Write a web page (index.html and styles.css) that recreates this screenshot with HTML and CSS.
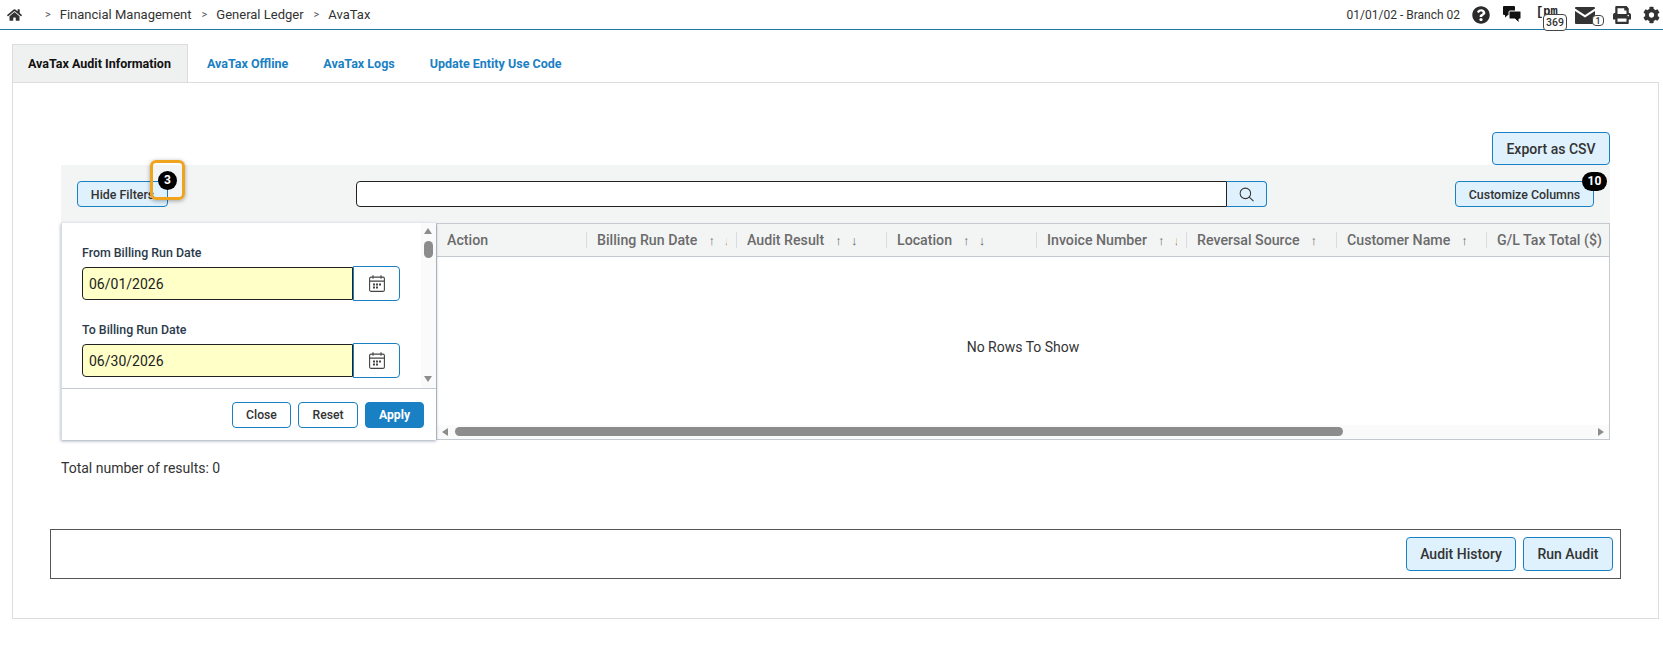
FILE: index.html
```html
<!DOCTYPE html>
<html lang="en">
<head>
    <meta charset="UTF-8">
    <title>AvaTax</title>
    <link rel="stylesheet" href="styles.css">
</head>
<body>
    <header class="topbar">
        <svg class="home-icon" viewBox="0 0 576 512"><path d="M280.37 148.26L96 300.11V464a16 16 0 0 0 16 16l112.06-.29a16 16 0 0 0 15.92-16V368a16 16 0 0 1 16-16h64a16 16 0 0 1 16 16v95.64a16 16 0 0 0 16 16.05L464 480a16 16 0 0 0 16-16V300L295.67 148.26a12.19 12.19 0 0 0-15.3 0zM571.6 251.47L488 182.56V44.05a12 12 0 0 0-12-12h-56a12 12 0 0 0-12 12v72.61L318.47 43a48 48 0 0 0-61 0L4.34 251.47a12 12 0 0 0-1.6 16.9l25.5 31A12 12 0 0 0 45.15 301l235.22-193.74a12.19 12.19 0 0 1 15.3 0L530.9 301a12 12 0 0 0 16.9-1.6l25.5-31a12 12 0 0 0-1.7-16.93z"/></svg>
        <nav class="crumbs">
            <span class="sep">&gt;</span><span>Financial Management</span>
            <span class="sep">&gt;</span><span>General Ledger</span>
            <span class="sep">&gt;</span><span>AvaTax</span>
        </nav>
        <div class="top-right">
            <span class="branch">01/01/02 - Branch 02</span>
            <svg class="top-icon help" viewBox="0 0 512 512"><path d="M504 256c0 136.997-111.043 248-248 248S8 392.997 8 256C8 119.083 119.043 8 256 8s248 111.083 248 248zM262.655 90c-54.497 0-89.255 22.957-116.549 63.758-3.536 5.286-2.353 12.415 2.715 16.258l34.699 26.31c5.205 3.947 12.621 3.008 16.665-2.122 17.864-22.658 30.113-35.797 57.303-35.797 20.429 0 45.698 13.148 45.698 32.958 0 14.976-12.363 22.667-32.534 33.976C247.128 238.528 216 254.941 216 296v4c0 6.627 5.373 12 12 12h56c6.627 0 12-5.373 12-12v-1.333c0-28.462 83.186-29.647 83.186-106.667 0-58.002-60.165-102-116.531-102zM256 338c-25.365 0-46 20.635-46 46 0 25.364 20.635 46 46 46s46-20.636 46-46c0-25.365-20.635-46-46-46z"/></svg>
            <svg class="top-icon chat" viewBox="0 0 18 17"><path d="M1 0h10a1 1 0 0 1 1 1v7a1 1 0 0 1-1 1H5l-3 2.500V9H1a1 1 0 0 1-1-1V1a1 1 0 0 1 1-1z"/><path class="chat-front" d="M7 5h10a1 1 0 0 1 1 1v6a1 1 0 0 1-1 1h-1v4l-4-4H7a1 1 0 0 1-1-1V6a1 1 0 0 1 1-1z"/></svg>
            <span class="cpm">[pm<span class="count count-cpm">369</span></span>
            <span class="mail">
                <svg class="top-icon mail-icon" viewBox="0 0 20 17"><path d="M1 0h18a1 1 0 0 1 1 1v.500L10 8 0 1.500V1a1 1 0 0 1 1-1z"/><path d="M0 4l10 6.500L20 4v12a1 1 0 0 1-1 1H1a1 1 0 0 1-1-1z"/></svg>
                <span class="count count-mail">1</span>
            </span>
            <svg class="top-icon print" viewBox="0 0 512 512"><path d="M448 192V77.25c0-8.49-3.37-16.62-9.37-22.63L393.37 9.37c-6-6-14.14-9.37-22.63-9.37H96C78.33 0 64 14.33 64 32v160c-35.35 0-64 28.65-64 64v112c0 8.84 7.16 16 16 16h48v96c0 17.67 14.33 32 32 32h320c17.67 0 32-14.33 32-32v-96h48c8.84 0 16-7.16 16-16V256c0-35.35-28.65-64-64-64zm-64 256H128v-96h256v96zm0-224H128V64h192v48c0 8.84 7.16 16 16 16h48v96zm48 72c-13.25 0-24-10.75-24-24 0-13.26 10.75-24 24-24s24 10.74 24 24c0 13.25-10.75 24-24 24z"/></svg>
            <svg class="top-icon cog" viewBox="0 0 512 512"><path d="M487.400 315.700l-42.600-24.600c4.300-23.200 4.300-47 0-70.200l42.600-24.600c4.900-2.800 7.100-8.600 5.500-14-11.100-35.600-30-67.800-54.700-94.600-3.800-4.100-10-5.100-14.800-2.300L380.800 110c-17.900-15.400-38.500-27.300-60.800-35.100V25.800c0-5.600-3.900-10.500-9.400-11.700-36.700-8.200-74.300-7.800-109.200 0-5.500 1.200-9.400 6.100-9.400 11.700V75c-22.200 7.900-42.800 19.800-60.800 35.100L88.700 85.500c-4.900-2.800-11-1.900-14.800 2.300-24.700 26.700-43.600 58.900-54.700 94.600-1.700 5.400.6 11.200 5.500 14L67.300 221c-4.300 23.200-4.300 47 0 70.200l-42.600 24.600c-4.900 2.800-7.100 8.600-5.500 14 11.100 35.600 30 67.800 54.700 94.600 3.800 4.100 10 5.100 14.800 2.300l42.600-24.600c17.900 15.400 38.500 27.300 60.800 35.100v49.200c0 5.600 3.900 10.500 9.400 11.700 36.700 8.200 74.300 7.800 109.200 0 5.500-1.200 9.400-6.100 9.400-11.700v-49.200c22.200-7.900 42.800-19.800 60.800-35.100l42.600 24.600c4.900 2.800 11 1.900 14.800-2.300 24.700-26.700 43.600-58.900 54.700-94.600 1.500-5.500-.7-11.300-5.600-14.100zM256 336c-44.100 0-80-35.900-80-80s35.900-80 80-80 80 35.900 80 80-35.900 80-80 80z"/></svg>
        </div>
    </header>

    <div class="tabs">
        <a class="tab active">AvaTax Audit Information</a>
        <a class="tab">AvaTax Offline</a>
        <a class="tab">AvaTax Logs</a>
        <a class="tab">Update Entity Use Code</a>
    </div>

    <main class="panel">
        <section class="workspace">
            <div class="export-row">
                <button class="btn btn-large export-btn">Export as CSV</button>
            </div>

            <div class="toolbar">
                <div class="filter-toggle">
                    <button class="btn btn-small hide-filters">Hide Filters</button>
                    <span class="callout"></span>
                    <span class="badge badge-filters">3</span>
                </div>
                <div class="search">
                    <input class="search-input" type="text">
                    <button class="search-btn">
                        <svg viewBox="0 0 16 16"><circle cx="6.800" cy="6.800" r="5.600"/><path d="M10.900 10.900L15.500 15"/></svg>
                    </button>
                </div>
                <div class="columns-toggle">
                    <button class="btn btn-small customize">Customize Columns</button>
                    <span class="badge badge-columns">10</span>
                </div>
            </div>

            <div class="results">
                <aside class="filters">
                    <div class="filter-body">
                        <div class="filter-fields">
                            <label class="field-label">From Billing Run Date</label>
                            <div class="date-field">
                                <input class="date-input" type="text" value="06/01/2026">
                                <button class="cal-btn">
                                    <svg viewBox="0 0 16 17"><rect x="0.600" y="2.100" width="14.800" height="14.300" rx="1.500"/><path d="M0.600 6.100h14.800M4 0.300v3.500M12 0.300v3.500"/><path class="cal-dots" d="M4 8.500h2v2H4zM7 8.500h2v2H7zM10 8.500h2v2h-2zM4 11.500h2v2H4zM7 11.500h2v2H7z"/></svg>
                                </button>
                            </div>
                            <label class="field-label second">To Billing Run Date</label>
                            <div class="date-field">
                                <input class="date-input" type="text" value="06/30/2026">
                                <button class="cal-btn">
                                    <svg viewBox="0 0 16 17"><rect x="0.600" y="2.100" width="14.800" height="14.300" rx="1.500"/><path d="M0.600 6.100h14.800M4 0.300v3.500M12 0.300v3.500"/><path class="cal-dots" d="M4 8.500h2v2H4zM7 8.500h2v2H7zM10 8.500h2v2h-2zM4 11.500h2v2H4zM7 11.500h2v2H7z"/></svg>
                                </button>
                            </div>
                        </div>
                        <div class="v-scroll">
                            <span class="arrow-up"></span>
                            <span class="v-thumb"></span>
                            <span class="arrow-down"></span>
                        </div>
                    </div>
                    <div class="filter-actions">
                        <button class="btn-outline">Close</button>
                        <button class="btn-outline">Reset</button>
                        <button class="btn-apply">Apply</button>
                    </div>
                </aside>

                <div class="grid">
                    <div class="grid-head">
                        <div class="col"><div class="col-label">Action</div></div>
                        <div class="col"><div class="col-label">Billing Run Date<span class="sort">↑ ↓</span></div></div>
                        <div class="col"><div class="col-label">Audit Result<span class="sort">↑ ↓</span></div></div>
                        <div class="col"><div class="col-label">Location<span class="sort">↑ ↓</span></div></div>
                        <div class="col"><div class="col-label">Invoice Number<span class="sort">↑ ↓</span></div></div>
                        <div class="col"><div class="col-label">Reversal Source<span class="sort">↑</span></div></div>
                        <div class="col"><div class="col-label">Customer Name<span class="sort">↑</span></div></div>
                        <div class="col"><div class="col-label">G/L Tax Total ($)</div></div>
                    </div>
                    <div class="grid-body">No Rows To Show</div>
                    <div class="h-scroll">
                        <span class="arrow-left"></span>
                        <span class="h-thumb"></span>
                        <span class="arrow-right"></span>
                    </div>
                </div>
            </div>

            <p class="total">Total number of results: 0</p>
        </section>

        <div class="action-bar">
            <button class="btn btn-large audit-history">Audit History</button>
            <button class="btn btn-large run-audit">Run Audit</button>
        </div>
    </main>
</body>
</html>
```

FILE: styles.css
```css
:root {
    --blue: #1a80c4;
    --btn-bg: #dff1fd;
    --text: #333;
    --line: #c3c9cf;
}

* {
    box-sizing: border-box;
}

body {
    margin: 0;
    background: #fff;
    color: var(--text);
    font-family: Roboto, "Liberation Sans", sans-serif;
    font-size: 14px;
}

button {
    font-family: inherit;
    padding: 0;
    cursor: pointer;
}

/* top bar */
.topbar {
    display: flex;
    align-items: center;
    height: 30px;
    border-bottom: 1px solid #1b77a6;
    padding: 0 3px 0 7px;
}

.home-icon {
    width: 15px;
    height: 14px;
    fill: #333;
}

.crumbs {
    margin-left: 23px;
    font-size: 13px;
    display: flex;
    align-items: center;
    color: #333;
}

.sep {
    font-size: 11px;
    margin-right: 9px;
    color: #555;
}

.crumbs span:not(.sep) {
    margin-right: 10px;
}

.top-right {
    margin-left: auto;
    display: flex;
    align-items: center;
}

.branch {
    font-size: 12px;
    margin-right: 12px;
}

.top-icon {
    display: block;
    fill: #2b2b2b;
}

.help {
    width: 18px;
    height: 18px;
    margin-right: 13px;
}

.chat {
    width: 18px;
    height: 17px;
    fill: #111;
    margin-right: 15px;
}

.chat-front {
    stroke: #fff;
    stroke-width: 1;
}

.cpm {
    position: relative;
    width: 39px;
    font-family: "Liberation Mono", monospace;
    font-size: 12px;
    font-weight: 700;
    line-height: 14px;
    margin-top: -5px;
    color: #222;
}

.count {
    position: absolute;
    background: #fff;
    border: 1px solid #444;
    border-radius: 4px;
    font-family: Roboto, "Liberation Sans", sans-serif;
    font-size: 10.500px;
    font-weight: 500;
    text-align: center;
    color: #333;
}

.count-cpm {
    left: 7px;
    top: 9px;
    width: 24px;
    height: 17px;
    line-height: 15px;
}

.mail {
    position: relative;
    width: 37px;
    margin-top: 1px;
}

.mail-icon {
    width: 20px;
    height: 17px;
    fill: #333;
}

.count-mail {
    left: 17px;
    top: 8px;
    width: 12px;
    height: 11px;
    line-height: 10px;
    font-size: 9px;
}

.print {
    width: 20px;
    height: 18px;
    fill: #333;
    margin-right: 11px;
}

.cog {
    width: 17px;
    height: 18px;
    fill: #333;
}

/* tabs */
.tabs {
    display: flex;
    margin: 14px 0 0 12px;
    height: 38px;
}

.tab {
    display: flex;
    align-items: center;
    padding: 0 17.500px;
    font-size: 12.500px;
    font-weight: 700;
    color: var(--blue);
}

.tab.active {
    width: 176px;
    margin-right: 1.500px;
    background: #eff0f0;
    border: 1px solid #ddd;
    border-bottom: 0;
    color: #111;
    padding: 0 15px;
}

.panel {
    margin: 0 4px 0 12px;
    height: 537px;
    border: 1px solid #ddd;
}

.workspace {
    margin: 0 48px;
}

.export-row {
    display: flex;
    justify-content: flex-end;
    padding-top: 49px;
}

.btn {
    background: var(--btn-bg);
    border: 1px solid var(--blue);
    border-radius: 4px;
    color: var(--text);
    font-weight: 500;
}

.btn-large {
    font-size: 14px;
}

.btn-small {
    font-size: 12.400px;
    height: 26px;
}

.export-btn {
    width: 118px;
    height: 33px;
}

/* toolbar */
.toolbar {
    display: flex;
    align-items: center;
    height: 58px;
    padding: 0 16px;
    background: #f3f5f5;
}

.filter-toggle,
.columns-toggle {
    position: relative;
}

.hide-filters {
    width: 91px;
}

.callout {
    position: absolute;
    left: 73px;
    top: -21px;
    width: 35px;
    height: 40px;
    border: 3px solid #f0a31c;
    border-radius: 6px;
    box-shadow: 0 1px 4px rgba(0, 0, 0, 0.35);
}

.badge {
    position: absolute;
    background: #000;
    color: #fff;
    border-radius: 10px;
    height: 19px;
    font-size: 12px;
    font-weight: 700;
    line-height: 19px;
    text-align: center;
}

.badge-filters {
    left: 81px;
    top: -10px;
    width: 19px;
}

.badge-columns {
    right: -13px;
    top: -9px;
    width: 25px;
}

.search {
    display: flex;
    margin-left: 188px;
}

.search-input {
    width: 871px;
    height: 26px;
    border: 1px solid #222;
    border-radius: 4px 0 0 4px;
    background: #fff;
}

.search-btn {
    display: flex;
    align-items: center;
    justify-content: center;
    width: 40px;
    height: 26px;
    background: var(--btn-bg);
    border: 1px solid var(--blue);
    border-left: 0;
    border-radius: 0 4px 4px 0;
}

.search-btn svg {
    width: 15px;
    height: 15px;
    fill: none;
    stroke: #333;
    stroke-width: 1.100;
}

.columns-toggle {
    margin-left: auto;
}

.customize {
    width: 139px;
}

/* filter panel + grid */
.results {
    display: flex;
    height: 217px;
}

.filters {
    position: relative;
    z-index: 1;
    display: flex;
    flex-direction: column;
    width: 375px;
    background: #fff;
    box-shadow: 0 1px 3px rgba(60, 80, 110, 0.5);
    border-left: 1px solid #d8dce0;
}

.filter-body {
    display: flex;
    height: 166px;
    border-bottom: 1px solid var(--line);
}

.filter-fields {
    flex: 1;
    padding: 22px 0 0 20px;
}

.field-label {
    display: block;
    font-size: 12.400px;
    font-weight: 500;
    line-height: 16px;
    color: #2b3a4a;
}

.field-label.second {
    margin-top: 21px;
}

.date-field {
    display: flex;
    align-items: center;
    margin-top: 5px;
}

.date-input {
    width: 271px;
    height: 33px;
    padding: 0 6px;
    border: 1px solid #222;
    border-radius: 4px 0 0 4px;
    background: #ffffc8;
    font-family: inherit;
    font-size: 14px;
    color: #222;
}

.cal-btn {
    display: flex;
    align-items: center;
    justify-content: center;
    flex: none;
    width: 47px;
    height: 35px;
    background: #fff;
    border: 1px solid var(--blue);
    border-radius: 0 4px 4px 0;
}

.cal-btn svg {
    width: 16px;
    height: 17px;
    fill: none;
    stroke: #444;
    stroke-width: 1.100;
}

.cal-btn .cal-dots {
    fill: #444;
    stroke: none;
}

.v-scroll {
    position: relative;
    flex: none;
    width: 15px;
    background: #fafafa;
}

.v-thumb {
    position: absolute;
    left: 3px;
    top: 18px;
    width: 9px;
    height: 17px;
    background: #8c8c8c;
    border-radius: 5px;
}

.arrow-up,
.arrow-down,
.arrow-left,
.arrow-right {
    position: absolute;
    width: 0;
    height: 0;
    border-style: solid;
    border-color: transparent;
}

.arrow-up {
    left: 3px;
    top: 5px;
    border-width: 0 4.500px 6px;
    border-bottom-color: #8c8c8c;
}

.arrow-down {
    left: 3px;
    top: 153px;
    border-width: 6px 4.500px 0;
    border-top-color: #8c8c8c;
}

.filter-actions {
    display: flex;
    justify-content: flex-end;
    gap: 7px;
    padding: 13px 12px 0 0;
}

.btn-outline,
.btn-apply {
    height: 26px;
    width: 59px;
    border: 1px solid var(--blue);
    border-radius: 4px;
    background: #fff;
    color: var(--text);
    font-size: 12.200px;
    font-weight: 500;
}

.btn-outline + .btn-outline {
    width: 60px;
}

.btn-apply {
    background: var(--blue);
    color: #fff;
    font-weight: 700;
}

.grid {
    flex: 1;
    min-width: 0;
    display: flex;
    flex-direction: column;
    border: 1px solid var(--line);
    overflow: hidden;
}

.grid-head {
    display: flex;
    align-items: center;
    flex: none;
    height: 33px;
    background: #f3f5f5;
    border-bottom: 1px solid var(--line);
    color: #6b6b6b;
    font-size: 14.200px;
    font-weight: 500;
}

.col {
    flex: none;
    width: 150px;
    height: 16px;
    line-height: 16px;
    padding-left: 10px;
    border-right: 1px solid #d8dcdf;
}

.col:last-child {
    border-right: 0;
}

.col-label {
    width: 130px;
    white-space: nowrap;
    overflow: hidden;
}

.sort {
    margin-left: 11px;
    font-size: 13px;
    font-weight: 400;
    word-spacing: 6px;
}

.grid-body {
    flex: 1;
    display: flex;
    align-items: center;
    justify-content: center;
    padding-top: 12px;
    color: #333;
}

.h-scroll {
    position: relative;
    flex: none;
    height: 14px;
    background: #fafafa;
}

.h-thumb {
    position: absolute;
    left: 18px;
    top: 2px;
    width: 888px;
    height: 9px;
    background: #8c8c8c;
    border-radius: 5px;
}

.arrow-left {
    left: 5px;
    top: 3px;
    border-width: 4.500px 6px 4.500px 0;
    border-right-color: #8c8c8c;
}

.arrow-right {
    right: 5px;
    top: 3px;
    border-width: 4.500px 0 4.500px 6px;
    border-left-color: #8c8c8c;
}

.total {
    margin: 20px 0 0;
    line-height: 16px;
    color: #333;
}

/* bottom action bar */
.action-bar {
    display: flex;
    justify-content: flex-end;
    align-items: center;
    gap: 7px;
    margin: 53px 37px 0;
    height: 50px;
    padding-right: 7px;
    border: 1px solid #555;
}

.audit-history {
    width: 110px;
    height: 34px;
}

.run-audit {
    width: 90px;
    height: 34px;
}
```
